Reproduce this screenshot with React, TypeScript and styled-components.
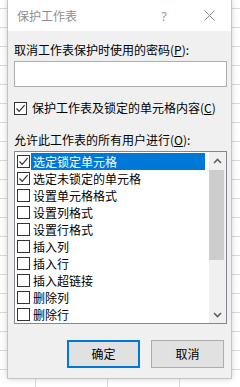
import styled, { createGlobalStyle } from "styled-components";

const GlobalStyle = createGlobalStyle`
    html, body {
        margin: 0;
        padding: 0;
    }
    body {
        width: 240px;
        height: 387px;
        overflow: hidden;
        background-color: #fff;
        background-image:
            linear-gradient(#dadada 1px, transparent 1px),
            linear-gradient(90deg, #dadada 1px, transparent 1px);
        background-size: 100% 19px, 72px 100%;
        background-position: 0 8px, 35px 0;
        font-family: "Noto Sans CJK SC", "Noto Sans", sans-serif;
        font-size: 12px;
    }
`;

const Page = styled.div`
    padding-left: 7px;
    height: 387px;
`;

const Dialog = styled.div`
    width: 225px;
    height: 379px;
    box-sizing: border-box;
    border: 1px solid #c4c4c4;
    border-top: 0;
    background: #f0f0f0;
    box-shadow: 0 0 6px rgba(0, 0, 0, 0.18);
    display: flex;
    flex-direction: column;
`;

const TitleBar = styled.div`
    height: 31px;
    background: #fff;
    display: flex;
    align-items: center;
    padding-left: 9px;
    padding-right: 16px;
    color: #8f8f8f;
`;

const Title = styled.span`
    flex: 1;
    line-height: 16px;
    margin-top: 1px;
`;

const Help = styled.span`
    font-family: "Noto Sans", sans-serif;
    font-size: 13px;
    color: #9a9a9a;
    margin-right: 37px;
`;

const Body = styled.div`
    flex: 1;
    display: flex;
    flex-direction: column;
    padding: 11px 5px 0 6px;
`;

const Label = styled.div<{ $mt?: number }>`
    line-height: 16px;
    color: #000;
    margin-top: ${(p) => p.$mt ?? 0}px;
    white-space: nowrap;
`;

const Input = styled.input`
    margin-top: 3px;
    height: 26px;
    box-sizing: border-box;
    border: 1px solid #adadad;
    background: #fff;
    outline: none;
    width: 213px;
`;

const CheckRow = styled.label`
    display: flex;
    align-items: center;
    gap: 5px;
    margin-top: 13px;
    line-height: 16px;
    white-space: nowrap;
`;

const Box = styled.span`
    width: 13px;
    height: 13px;
    box-sizing: border-box;
    border: 1px solid #333;
    background: #fff;
    flex: none;
    display: flex;
    align-items: center;
    justify-content: center;
`;

const List = styled.div`
    margin-top: 3px;
    width: 213px;
    height: 173px;
    box-sizing: border-box;
    border: 1px solid #828790;
    background: #fff;
    display: flex;
`;

const Items = styled.div`
    flex: 1;
    padding-top: 1px;
    padding-left: 2px;
    padding-right: 4px;
`;

const Item = styled.div`
    height: 17px;
    display: flex;
    align-items: center;
`;

const ItemText = styled.span<{ $selected?: boolean }>`
    flex: 1;
    margin-left: 1px;
    padding-left: 2px;
    height: 17px;
    line-height: 17px;
    white-space: nowrap;
    background: ${(p) => (p.$selected ? "#0078d7" : "transparent")};
    color: ${(p) => (p.$selected ? "#fff" : "#000")};
`;

const Scrollbar = styled.div`
    width: 17px;
    background: #f0f0f0;
    display: flex;
    flex-direction: column;
    align-items: center;
`;

const Arrow = styled.div`
    height: 17px;
    width: 17px;
    display: flex;
    align-items: center;
    justify-content: center;
`;

const Track = styled.div`
    flex: 1;
    width: 100%;
    display: flex;
    flex-direction: column;
`;

const Thumb = styled.div`
    height: 90px;
    margin: 1px 2px 0 0;
    background: #cdcdcd;
`;

const Buttons = styled.div`
    margin-top: 16px;
    display: flex;
    justify-content: flex-end;
    gap: 11px;
    padding-right: 2px;
`;

const Button = styled.button<{ $default?: boolean }>`
    width: 73px;
    height: 28px;
    box-sizing: border-box;
    border: ${(p) => (p.$default ? "2px solid #0078d7" : "1px solid #adadad")};
    background: #e1e1e1;
    font-family: inherit;
    font-size: 12px;
    color: #000;
    padding: 0;
    line-height: 16px;
`;

const Check = () => (
    <svg width="11" height="11" viewBox="0 0 11 11">
        <path d="M1.5 5.5 L4.2 8.3 L9.6 2.2" fill="none" stroke="#333" strokeWidth="1.2" />
    </svg>
);

const CloseIcon = () => (
    <svg width="11" height="11" viewBox="0 0 11 11">
        <path d="M0.5 0.5 L10.5 10.5 M10.5 0.5 L0.5 10.5" stroke="#8a8a8a" strokeWidth="1" />
    </svg>
);

const Chevron = ({ up }: { up?: boolean }) => (
    <svg width="9" height="6" viewBox="0 0 9 6">
        <path
            d={up ? "M1 5 L4.5 1.5 L8 5" : "M1 1 L4.5 4.5 L8 1"}
            fill="none"
            stroke="#606060"
            strokeWidth="1.6"
        />
    </svg>
);

const items = [
    { text: "选定锁定单元格", checked: true, selected: true },
    { text: "选定未锁定的单元格", checked: true },
    { text: "设置单元格格式" },
    { text: "设置列格式" },
    { text: "设置行格式" },
    { text: "插入列" },
    { text: "插入行" },
    { text: "插入超链接" },
    { text: "删除列" },
    { text: "删除行" },
];

export default function App() {
    return (
        <Page>
            <GlobalStyle />
            <Dialog>
                <TitleBar>
                    <Title>保护工作表</Title>
                    <Help>?</Help>
                    <CloseIcon />
                </TitleBar>
                <Body>
                    <Label>
                        取消工作表保护时使用的密码(<u>P</u>):
                    </Label>
                    <Input type="password" />
                    <CheckRow>
                        <Box>
                            <Check />
                        </Box>
                        <span>
                            保护工作表及锁定的单元格内容(<u>C</u>)
                        </span>
                    </CheckRow>
                    <Label $mt={16}>
                        允许此工作表的所有用户进行(<u>O</u>):
                    </Label>
                    <List>
                        <Items>
                            {items.map((it) => (
                                <Item key={it.text}>
                                    <Box>{it.checked && <Check />}</Box>
                                    <ItemText $selected={it.selected}>{it.text}</ItemText>
                                </Item>
                            ))}
                        </Items>
                        <Scrollbar>
                            <Arrow>
                                <Chevron up />
                            </Arrow>
                            <Track>
                                <Thumb />
                            </Track>
                            <Arrow>
                                <Chevron />
                            </Arrow>
                        </Scrollbar>
                    </List>
                    <Buttons>
                        <Button $default>确定</Button>
                        <Button>取消</Button>
                    </Buttons>
                </Body>
            </Dialog>
        </Page>
    );
}
